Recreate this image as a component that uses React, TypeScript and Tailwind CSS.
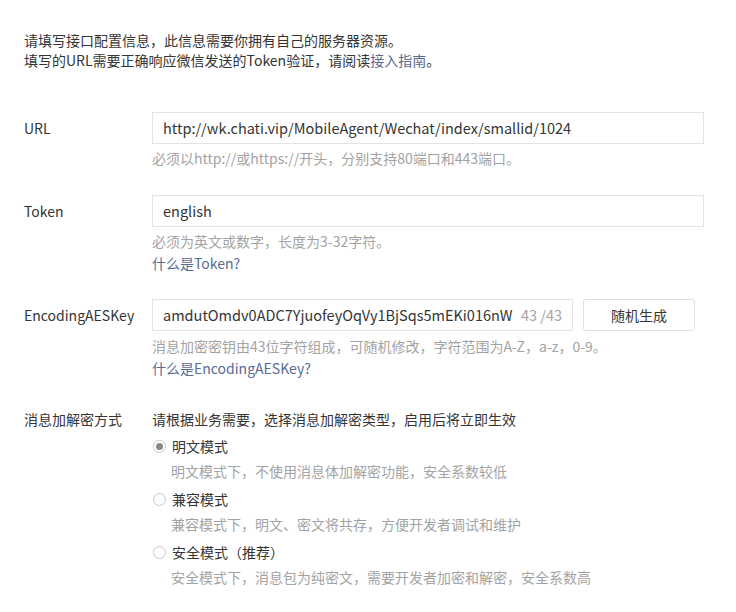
import React from 'react';

const FONT = '"Microsoft YaHei", "Noto Sans CJK SC", "Liberation Sans", sans-serif';

function Radio({ checked }: { checked?: boolean }) {
  return (
    <span className="w-[13px] h-[13px] rounded-full border border-[#c9c9c9] bg-white flex items-center justify-center shrink-0">
      {checked && <span className="w-[7px] h-[7px] rounded-full bg-[#8a8a8a]" />}
    </span>
  );
}

const MODES = [
  { name: '明文模式', desc: '明文模式下，不使用消息体加解密功能，安全系数较低', checked: true },
  { name: '兼容模式', desc: '兼容模式下，明文、密文将共存，方便开发者调试和维护' },
  { name: '安全模式（推荐）', desc: '安全模式下，消息包为纯密文，需要开发者加密和解密，安全系数高' },
];

export default function App() {
  return (
    <div className="w-[736px] h-[612px] bg-white text-[#353535] text-[14px] pl-6 pt-[30px]" style={{ fontFamily: FONT }}>
      <div className="leading-5">
        <p>请填写接口配置信息，此信息需要你拥有自己的服务器资源。</p>
        <p>
          填写的URL需要正确响应微信发送的Token验证，请阅读<span className="text-[#576b95]">接入指南</span>。
        </p>
      </div>

      {/* URL */}
      <div className="flex mt-[42px]">
        <div className="w-32 h-8 flex items-center">URL</div>
        <div>
          <div className="w-[552px] h-8 border border-[#e4e4e4] flex items-center px-[10px] text-[14.5px]">
            http://wk.chati.vip/MobileAgent/Wechat/index/smallid/1024
          </div>
          <p className="mt-[3px] leading-[22px] text-[#a3a3a3]">必须以http://或https://开头，分别支持80端口和443端口。</p>
        </div>
      </div>

      {/* Token */}
      <div className="flex mt-[26px]">
        <div className="w-32 h-8 flex items-center">Token</div>
        <div>
          <div className="w-[552px] h-8 border border-[#e4e4e4] flex items-center px-[10px] text-[14.5px]">english</div>
          <p className="mt-[3px] leading-[22px] text-[#a3a3a3]">必须为英文或数字，长度为3-32字符。</p>
          <p className="leading-[22px] text-[#576b95]">什么是Token?</p>
        </div>
      </div>

      {/* EncodingAESKey */}
      <div className="flex mt-[25px]">
        <div className="w-32 h-8 flex items-center">EncodingAESKey</div>
        <div>
          <div className="flex gap-[10px]">
            <div className="w-[421px] h-8 border border-[#e4e4e4] flex items-center px-[10px] justify-between text-[14.5px]">
              <span>amdutOmdv0ADC7YjuofeyOqVy1BjSqs5mEKi016nW</span>
              <span className="text-[#a3a3a3]">43 /43</span>
            </div>
            <button className="w-[112px] h-8 border border-[#e0e0e0] rounded-[3px] bg-white text-[#353535]">随机生成</button>
          </div>
          <p className="mt-1 leading-[22px] text-[#a3a3a3]">消息加密密钥由43位字符组成，可随机修改，字符范围为A-Z，a-z，0-9。</p>
          <p className="leading-[22px] text-[#576b95]">什么是EncodingAESKey?</p>
        </div>
      </div>

      {/* 消息加解密方式 */}
      <div className="flex mt-[29px]">
        <div className="w-32 leading-[22px]">消息加解密方式</div>
        <div>
          <p className="leading-[22px]">请根据业务需要，选择消息加解密类型，启用后将立即生效</p>
          {MODES.map((m, i) => (
            <div key={m.name}>
              <div className={`flex items-center gap-[6px] h-[22px] pl-px ${i === 0 ? 'mt-[5px]' : 'mt-[6px]'}`}>
                <Radio checked={m.checked} />
                <span>{m.name}</span>
              </div>
              <p className="leading-[22px] mt-[3px] pl-[19px] text-[#a3a3a3]">{m.desc}</p>
            </div>
          ))}
        </div>
      </div>
    </div>
  );
}
